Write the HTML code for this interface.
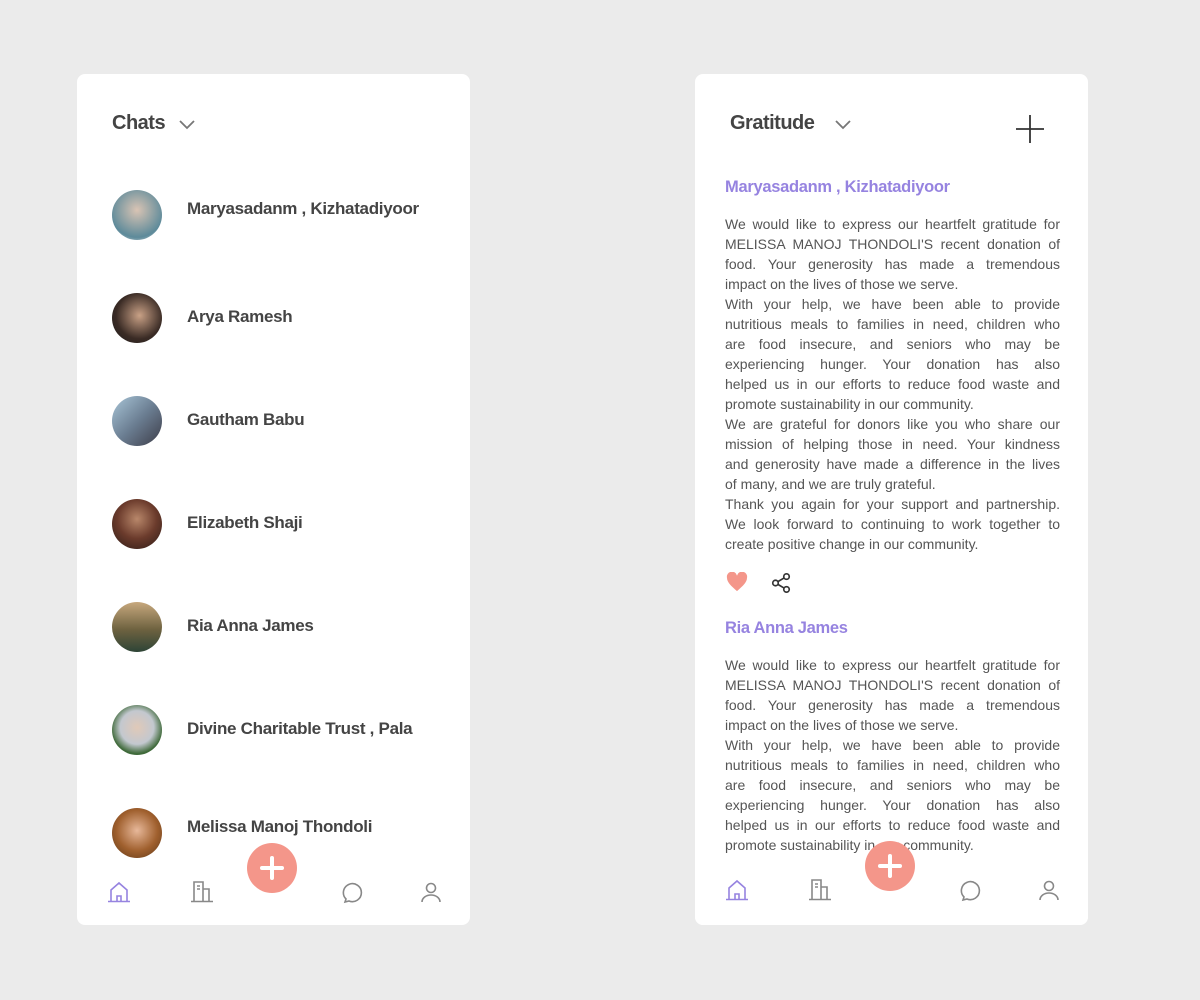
<!DOCTYPE html>
<html><head><style>
*{margin:0;padding:0;box-sizing:border-box}
body{width:1200px;height:1000px;background:#ebebeb;font-family:"Liberation Sans",sans-serif;position:relative;overflow:hidden}
.card{position:absolute;top:74px;width:393px;height:851px;background:#fff;border-radius:8px;overflow:hidden}
.title{position:absolute;top:112px;font-size:20px;font-weight:bold;color:#444;letter-spacing:-0.5px}
.chev{position:absolute;top:118px}
.av{position:absolute;left:35px;width:50px;height:50px;border-radius:50%}
.nm{position:absolute;left:110px;font-size:17px;font-weight:bold;color:#444;letter-spacing:-0.3px}
.fab{position:absolute;width:50px;height:50px;border-radius:50%;background:#f4968a}
.fab:before,.fab:after{content:"";position:absolute;background:#fff;border-radius:2px}
.fab:before{left:13px;top:23px;width:24px;height:4px}
.fab:after{left:23px;top:13px;width:4px;height:24px}
.h{position:absolute;left:30px;font-size:16.5px;font-weight:bold;color:#9683e0;letter-spacing:-0.3px}
.p{position:absolute;left:30px;width:335px;font-size:14px;line-height:20px;color:#555;white-space:nowrap}
.p b{display:block;font-weight:normal;text-align:justify;text-align-last:justify}
.p i{display:block;font-style:normal}
</style></head><body>
<div class="card" style="left:77px">
<div class="title" style="left:35px;top:38px">Chats</div>
<svg class="chev" style="left:101px;top:44px" width="18" height="12"><path d="M2 3l7 7 7-7" fill="none" stroke="#777" stroke-width="1.8"/></svg>
<div class="av" style="top:116px;background:radial-gradient(circle at 50% 40%,#d9c4b4,#5d8a9a 70%,#e8e8e8)"></div>
<div class="nm" style="top:125px">Maryasadanm , Kizhatadiyoor</div>
<div class="av" style="top:219px;background:radial-gradient(circle at 55% 45%,#c9a186,#3a2b25 60%,#1c1c1c)"></div>
<div class="nm" style="top:233px">Arya Ramesh</div>
<div class="av" style="top:322px;background:linear-gradient(135deg,#a9c6d8,#6c7f93 50%,#3c3c48)"></div>
<div class="nm" style="top:336px">Gautham Babu</div>
<div class="av" style="top:425px;background:radial-gradient(circle at 50% 40%,#b8876a,#6b3b2c 50%,#2a1a16)"></div>
<div class="nm" style="top:439px">Elizabeth Shaji</div>
<div class="av" style="top:528px;background:linear-gradient(180deg,#c7a87d,#6e6240 55%,#2d4436)"></div>
<div class="nm" style="top:542px">Ria Anna James</div>
<div class="av" style="top:631px;background:radial-gradient(circle at 50% 45%,#e0c9b8,#c3c8cf 45%,#3f6a3a 70%)"></div>
<div class="nm" style="top:645px">Divine Charitable Trust , Pala</div>
<div class="av" style="top:734px;background:radial-gradient(circle at 50% 45%,#e7b89a,#a0602e 55%,#5a3516)"></div>
<div class="nm" style="top:743px">Melissa Manoj Thondoli</div>
<div class="fab" style="left:170px;top:769px"></div>
<svg style="position:absolute;left:30px;top:806px" width="24" height="24" viewBox="0 0 24 24" fill="none" stroke="#9683e0" stroke-width="1.6"><path d="M4 21V10l8-7 8 7v11M10 21v-5h4v5M1 21.5h22"/></svg>
<svg style="position:absolute;left:113px;top:806px" width="24" height="24" viewBox="0 0 24 24" fill="none" stroke="#888" stroke-width="1.6"><path d="M4 21V2h9v19M13 9h6v12M7 6h3M7 9h3M1 21.5h22"/></svg>
<svg style="position:absolute;left:264px;top:806px" width="24" height="24" viewBox="0 0 24 24" fill="none" stroke="#888" stroke-width="1.6"><path d="M5 19a9 9 0 1 1 3 2l-4 1z"/></svg>
<svg style="position:absolute;left:342px;top:806px" width="24" height="24" viewBox="0 0 24 24" fill="none" stroke="#888" stroke-width="1.6"><circle cx="12" cy="8" r="4.5"/><path d="M3 22a9 7 0 0 1 18 0"/></svg>
</div>

<div class="card" style="left:695px">
<div class="title" style="left:35px;top:38px">Gratitude</div>
<svg class="chev" style="left:139px;top:44px" width="18" height="12"><path d="M2 3l7 7 7-7" fill="none" stroke="#777" stroke-width="1.8"/></svg>
<svg style="position:absolute;left:321px;top:41px" width="28" height="28"><path d="M14 0v28M0 14h28" stroke="#333" stroke-width="1.8"/></svg>
<div class="h" style="top:104px">Maryasadanm , Kizhatadiyoor</div>
<div class="p" style="top:140px">
<b>We would like to express our heartfelt gratitude for</b>
<b>MELISSA MANOJ THONDOLI'S recent donation of</b>
<b>food. Your generosity has made a tremendous</b>
<i>impact on the lives of those we serve.</i>
<b>With your help, we have been able to provide</b>
<b>nutritious meals to families in need, children who</b>
<b>are food insecure, and seniors who may be</b>
<b>experiencing hunger. Your donation has also</b>
<b>helped us in our efforts to reduce food waste and</b>
<i>promote sustainability in our community.</i>
<b>We are grateful for donors like you who share our</b>
<b>mission of helping those in need. Your kindness</b>
<b>and generosity have made a difference in the lives</b>
<i>of many, and we are truly grateful.</i>
<b>Thank you again for your support and partnership.</b>
<b>We look forward to continuing to work together to</b>
<i>create positive change in our community.</i>
</div>
<svg style="position:absolute;left:31px;top:498px" width="22" height="20" viewBox="0 0 24 22"><path d="M12 21C5 15 1 11 1 6.5A5.5 5.5 0 0 1 12 4a5.5 5.5 0 0 1 11 2.5C23 11 19 15 12 21z" fill="#f4968a"/></svg>
<svg style="position:absolute;left:75px;top:498px" width="22" height="22" viewBox="0 0 24 24" fill="none" stroke="#333" stroke-width="1.8"><circle cx="18" cy="5" r="3"/><circle cx="6" cy="12" r="3"/><circle cx="18" cy="19" r="3"/><path d="M8.6 13.5l6.8 4M15.4 6.5l-6.8 4"/></svg>
<div class="h" style="top:545px">Ria Anna James</div>
<div class="p" style="top:581px">
<b>We would like to express our heartfelt gratitude for</b>
<b>MELISSA MANOJ THONDOLI'S recent donation of</b>
<b>food. Your generosity has made a tremendous</b>
<i>impact on the lives of those we serve.</i>
<b>With your help, we have been able to provide</b>
<b>nutritious meals to families in need, children who</b>
<b>are food insecure, and seniors who may be</b>
<b>experiencing hunger. Your donation has also</b>
<b>helped us in our efforts to reduce food waste and</b>
<i>promote sustainability in our community.</i>
</div>
<div style="position:absolute;left:0;top:785px;width:393px;height:66px;background:linear-gradient(#fff0,#fff 20%)"></div>
<div class="fab" style="left:170px;top:767px"></div>
<svg style="position:absolute;left:30px;top:804px" width="24" height="24" viewBox="0 0 24 24" fill="none" stroke="#9683e0" stroke-width="1.6"><path d="M4 21V10l8-7 8 7v11M10 21v-5h4v5M1 21.5h22"/></svg>
<svg style="position:absolute;left:113px;top:804px" width="24" height="24" viewBox="0 0 24 24" fill="none" stroke="#888" stroke-width="1.6"><path d="M4 21V2h9v19M13 9h6v12M7 6h3M7 9h3M1 21.5h22"/></svg>
<svg style="position:absolute;left:264px;top:804px" width="24" height="24" viewBox="0 0 24 24" fill="none" stroke="#888" stroke-width="1.6"><path d="M5 19a9 9 0 1 1 3 2l-4 1z"/></svg>
<svg style="position:absolute;left:342px;top:804px" width="24" height="24" viewBox="0 0 24 24" fill="none" stroke="#888" stroke-width="1.6"><circle cx="12" cy="8" r="4.5"/><path d="M3 22a9 7 0 0 1 18 0"/></svg>
</div>
</body></html>
